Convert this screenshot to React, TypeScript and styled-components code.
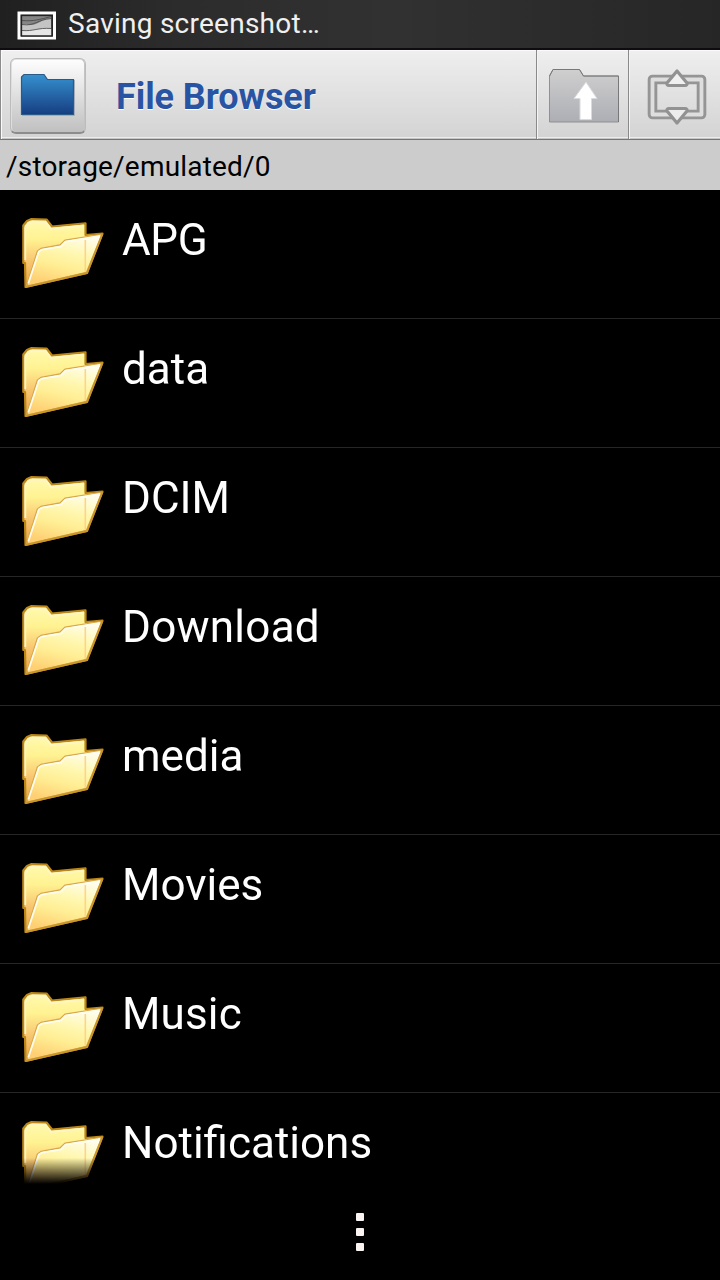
import React from "react";
import styled, { createGlobalStyle } from "styled-components";

const GlobalStyle = createGlobalStyle`
  * { box-sizing: border-box; }
  body { margin: 0; background: #000; overflow: hidden; }
`;

const Screen = styled.div`
  width: 720px;
  height: 1280px;
  display: flex;
  flex-direction: column;
  overflow: hidden;
  background: #000;
  font-family: Roboto, "Liberation Sans", sans-serif;
`;

const StatusBar = styled.div`
  height: 50px;
  flex: none;
  display: flex;
  align-items: flex-start;
  gap: 12px;
  padding: 0 0 0 17px;
  background: linear-gradient(90deg, #202020, #2c2c2c 25%, #313131 55%, #262626);
  border-bottom: 2px solid #0e0c0e;

  svg {
    margin-top: 10.5px;
  }
`;

const StatusText = styled.span`
  color: #f0f0f0;
  font-size: 28px;
  line-height: 47px;
  letter-spacing: 0.25px;
`;

const Header = styled.header`
  height: 90px;
  flex: none;
  display: flex;
  background: linear-gradient(#efefef, #d3d3d3);
  border-bottom: 1px solid #757575;
  box-shadow: inset 0 -1px #c4c4c4, inset 0 -2px #ededed, inset 0 1px #fafafa;
`;

const HomeArea = styled.div`
  flex: 1;
  display: flex;
  align-items: center;
  border-left: 1px solid #8c8c8c;
  box-shadow: inset 1px 0 #fafafa;
  padding: 2px 0 0 9px;
`;

const AppIcon = styled.div`
  width: 76px;
  height: 76px;
  border-radius: 6px;
  border: 1px solid #bcbcbc;
  border-bottom: 2px solid #8c8c8c;
  background: linear-gradient(#fefefe, #c0c0c0);
  box-shadow: inset 1px 0 #dedede, inset -1px 0 #c4c4c4, inset 0 1px #e4e4e4;
  display: flex;
  align-items: center;
  justify-content: center;
  padding-bottom: 1px;
`;

const Title = styled.h1`
  margin: 2px 0 0 30px;
  color: #2854a3;
  font-size: 36px;
  line-height: 44px;
  font-weight: 700;
  letter-spacing: -0.07px;
  text-shadow: 0 1px #fff;
`;

const ActionButton = styled.button`
  width: 92px;
  height: 89px;
  padding: 2px 0 0 2px;
  background: none;
  border: 0;
  border-left: 1px solid #8a8a8a;
  box-shadow: inset 1px 0 #f4f4f4;
  display: flex;
  align-items: center;
  justify-content: center;
`;

const PathBar = styled.div`
  height: 50px;
  flex: none;
  padding: 2px 6px 0;
  background: #ccc;
  color: #000;
  font-size: 28px;
  line-height: 50px;
  letter-spacing: 0.19px;
`;

const FileList = styled.ul`
  height: 994px;
  flex: none;
  margin: 0;
  padding: 0;
  list-style: none;
  overflow: hidden;
  mask-image: linear-gradient(#000 968px, transparent 994px);
`;

const Row = styled.li`
  height: 129px;
  display: flex;
  padding: 26px 0 0 20px;
  gap: 16px;
  border-bottom: 1px solid #262626;
`;

const Name = styled.span<{ $spacing: number }>`
  color: #fff;
  font-size: 44px;
  line-height: 48px;
  letter-spacing: ${(p) => (p.$spacing ? `${p.$spacing}px` : "normal")};
`;

const NavBar = styled.nav`
  flex: 1;
  display: flex;
  flex-direction: column;
  align-items: center;
  gap: 7px;
  padding-top: 29px;
`;

const Dot = styled.i`
  width: 8px;
  height: 8px;
  border-radius: 1px;
  background: #faf5f3;
`;

const PictureIcon = () => (
  <svg width="39" height="29" viewBox="0 0 39 29">
    <rect x="2" y="2" width="35.500" height="25" fill="#2a2a2a" stroke="#fff" strokeWidth="3" />
    <path d="M5 4.500h29.500v20H5z" fill="#c4c4c4" />
    <path d="M5 4.500h29.500v3c-9 0-14 7-21 6.500-4 0-6-1-8.500-.5z" fill="#858585" />
    <path d="M5 19.500c9 1 16-2.500 29.500-2v7H5z" fill="#e6e6e6" />
    <path
      d="M5 13.500c13 2 15-5 29.500-6M5 19.500c12 1 15-3 29.500-2M5 9.500c12 1 17-1 29.500-4"
      fill="none"
      stroke="#444"
      strokeWidth=".8"
    />
    <rect x="4.500" y="4.500" width="30.500" height="20.500" fill="none" stroke="#222" strokeWidth="1.300" />
  </svg>
);

const BlueFolder = () => (
  <svg width="56" height="44" viewBox="0 0 56 44">
    <defs>
      <linearGradient id="blue" x2="0" y2="1">
        <stop stopColor="#3590ce" />
        <stop offset="1" stopColor="#163e82" />
      </linearGradient>
    </defs>
    <path
      d="M1.500 4 4 1.500h20L27.500 6.500h26V41.500h-52z"
      fill="url(#blue)"
      stroke="#2a5a88"
      strokeWidth="1.200"
    />
    <path d="M2 42.500h52.500V7" fill="none" stroke="#a5acb8" strokeWidth="1" />
  </svg>
);

const UpFolder = () => (
  <svg width="72" height="58" viewBox="0 0 72 58">
    <defs>
      <linearGradient id="grey" x2="0" y2="1">
        <stop stopColor="#cfcfcf" />
        <stop offset="1" stopColor="#adaeb4" />
      </linearGradient>
    </defs>
    <path d="M1.500 9 5 2.500h26.500L35.500 9h35v46h-69z" fill="url(#grey)" stroke="#8f9092" />
    <path d="M1.500 9 5 2.500h26.500L35.500 9h35v46" fill="none" stroke="#77787a" />
    <path
      d="M38 15 49 31.500h-5.500V52.500H32V31.500h-6z"
      fill="#fff"
      stroke="#d9dadd"
      strokeWidth="1"
    />
  </svg>
);

const ExpandIcon = () => (
  <svg width="62" height="58" viewBox="0 0 62 58">
    <g fill="none" strokeLinejoin="round">
      <rect x="7.500" y="12.500" width="49" height="35" stroke="#959595" strokeWidth="9.600" />
      <rect x="7.500" y="12.500" width="49" height="35" stroke="#dedede" strokeWidth="3.800" />
      <path
        d="M32 4 42 16Q42.500 18.500 40 18.500H24Q21.500 18.500 22 16z"
        fill="#f0f0f0"
        stroke="#929292"
        strokeWidth="3.200"
      />
      <path
        d="M32 56 42 44Q42.500 41.500 40 41.500H24Q21.500 41.500 22 44z"
        fill="#ededed"
        stroke="#929292"
        strokeWidth="3.200"
      />
    </g>
  </svg>
);

const YellowFolder = () => (
  <svg width="86" height="74" viewBox="0 0 86 74">
    <defs>
      <linearGradient id="back" x2="0" y2="1">
        <stop stopColor="#fffab0" />
        <stop offset=".3" stopColor="#fff291" />
        <stop offset=".6" stopColor="#f9c873" />
        <stop offset="1" stopColor="#e5a344" />
      </linearGradient>
      <linearGradient id="front" x1=".8" x2=".45" y2="1">
        <stop stopColor="#fffef2" />
        <stop offset=".4" stopColor="#fff7ae" />
        <stop offset=".65" stopColor="#ffee94" />
        <stop offset="1" stopColor="#ffcf73" />
      </linearGradient>
    </defs>
    <path
      d="M3.300 9.500 7 5 11 3.200l15.500.3 5.500 7L65.500 7.300V19L82.500 17.500 67 57 5.500 71 5 47H3.300z"
      fill="url(#back)"
      stroke="#bd8717"
      strokeWidth="2.200"
      strokeLinejoin="round"
    />
    <path d="M5.300 44V12L8.500 7l4-1.500 13 .5 5.500 7L64 9.500" fill="none" stroke="#fff6c4" strokeWidth="1.800" />
    <path
      d="M6.500 70.500 17.500 35 21 32.500 40 29 45 24.300 82 18.500 66.500 56.500z"
      fill="url(#front)"
      stroke="#d9a748"
      strokeWidth="1.500"
      strokeLinejoin="round"
    />
    <path
      d="M8.300 67.500 18.800 35.500 22 33.500 41 30.300l4.500-4.800L80 19.800"
      fill="none"
      stroke="#fffdf0"
      strokeWidth="1.800"
    />
    <path d="M65.300 24v32" stroke="#ffd486" strokeWidth="1.600" />
    <path
      d="M5.500 71 67 57 82.500 17.700"
      fill="none"
      stroke="#c9962c"
      strokeWidth="1.800"
      strokeLinejoin="round"
    />
  </svg>
);

const folders = [
  { name: "APG", spacing: -0.4 },
  { name: "data", spacing: 0 },
  { name: "DCIM", spacing: 0 },
  { name: "Download", spacing: 0.25 },
  { name: "media", spacing: 0 },
  { name: "Movies", spacing: 0 },
  { name: "Music", spacing: 0.15 },
  { name: "Notifications", spacing: 0 },
];

export default function App() {
  return (
    <>
      <GlobalStyle />
      <Screen>
        <StatusBar>
          <PictureIcon />
          <StatusText>Saving screenshot…</StatusText>
        </StatusBar>
        <Header>
          <HomeArea>
            <AppIcon>
              <BlueFolder />
            </AppIcon>
            <Title>File Browser</Title>
          </HomeArea>
          <ActionButton aria-label="Up one folder">
            <UpFolder />
          </ActionButton>
          <ActionButton aria-label="Expand">
            <ExpandIcon />
          </ActionButton>
        </Header>
        <PathBar>/storage/emulated/0</PathBar>
        <FileList>
          {folders.map((f) => (
            <Row key={f.name}>
              <YellowFolder />
              <Name $spacing={f.spacing}>{f.name}</Name>
            </Row>
          ))}
        </FileList>
        <NavBar>
          <Dot />
          <Dot />
          <Dot />
        </NavBar>
      </Screen>
    </>
  );
}
